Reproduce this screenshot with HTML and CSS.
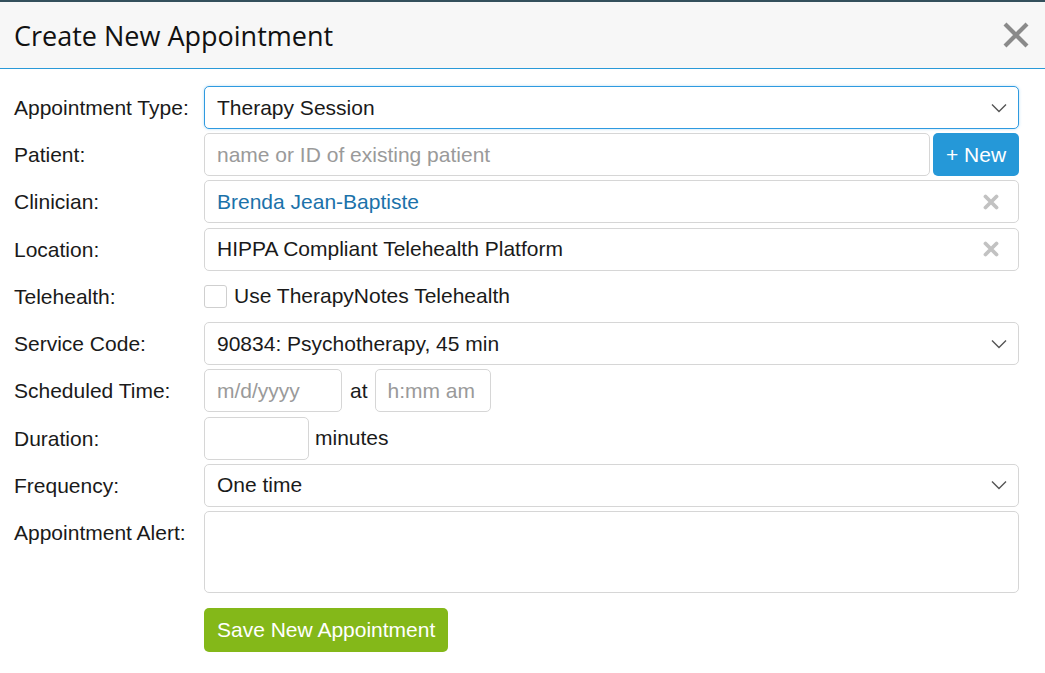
FILE: index.html
```html
<!DOCTYPE html>
<html lang="en">
<head>
<meta charset="utf-8">
<title>Create New Appointment</title>
<link rel="stylesheet" href="styles.css">
</head>
<body>
<div class="topstrip"></div>
<div class="dialog">
  <header class="dlg-head">
    <h1 class="dlg-title">Create New Appointment</h1>
    <button class="dlg-close" aria-label="Close">
      <svg width="28" height="28" viewBox="0 0 28 28"><path d="M3 3 L25 25 M25 3 L3 25" stroke="#8a8a8a" stroke-width="4.2" stroke-linecap="butt"/></svg>
    </button>
  </header>
  <form class="form">
    <label class="lbl">Appointment Type:</label>
    <div class="field select focused"><span class="val">Therapy Session</span><span class="chev"><svg width="16" height="10" viewBox="0 0 16 10"><path d="M1 1.5 L8 8.5 L15 1.5" fill="none" stroke="#555" stroke-width="1.4"/></svg></span></div>

    <label class="lbl">Patient:</label>
    <div class="inline">
      <div class="field grow"><span class="ph">name or ID of existing patient</span></div>
      <button type="button" class="btn-new">+ New</button>
    </div>

    <label class="lbl">Clinician:</label>
    <div class="field"><span class="val link">Brenda Jean-Baptiste</span><span class="clear"><svg width="16" height="16" viewBox="0 0 16 16"><path d="M2.5 2.5 L13.5 13.5 M13.5 2.5 L2.5 13.5" stroke="#c2c2c2" stroke-width="3.8" stroke-linecap="round"/></svg></span></div>

    <label class="lbl">Location:</label>
    <div class="field"><span class="val">HIPPA Compliant Telehealth Platform</span><span class="clear"><svg width="16" height="16" viewBox="0 0 16 16"><path d="M2.5 2.5 L13.5 13.5 M13.5 2.5 L2.5 13.5" stroke="#c2c2c2" stroke-width="3.8" stroke-linecap="round"/></svg></span></div>

    <label class="lbl">Telehealth:</label>
    <div class="inline check-row"><span class="checkbox"></span><span class="txt">Use TherapyNotes Telehealth</span></div>

    <label class="lbl">Service Code:</label>
    <div class="field select"><span class="val">90834: Psychotherapy, 45 min</span><span class="chev"><svg width="16" height="10" viewBox="0 0 16 10"><path d="M1 1.5 L8 8.5 L15 1.5" fill="none" stroke="#555" stroke-width="1.4"/></svg></span></div>

    <label class="lbl">Scheduled Time:</label>
    <div class="inline">
      <div class="field date"><span class="ph">m/d/yyyy</span></div>
      <span class="txt at">at</span>
      <div class="field time"><span class="ph">h:mm am</span></div>
    </div>

    <label class="lbl">Duration:</label>
    <div class="inline">
      <div class="field dur"></div>
      <span class="txt">minutes</span>
    </div>

    <label class="lbl">Frequency:</label>
    <div class="field select"><span class="val">One time</span><span class="chev"><svg width="16" height="10" viewBox="0 0 16 10"><path d="M1 1.5 L8 8.5 L15 1.5" fill="none" stroke="#555" stroke-width="1.4"/></svg></span></div>

    <label class="lbl top">Appointment Alert:</label>
    <div class="field area"></div>

    <span></span>
    <div class="actions"><button type="button" class="btn-save">Save New Appointment</button></div>
  </form>
</div>
</body>
</html>
```
FILE: styles.css
```css
html, body {
  margin: 0;
  padding: 0;
  background: #ffffff;
}
body {
  font-family: "Liberation Sans", Arial, sans-serif;
  font-size: 21px;
  color: #1a1a1a;
  width: 1045px;
  height: 673px;
  overflow: hidden;
}
.topstrip {
  height: 2px;
  background: #34505c;
}
.dlg-head {
  height: 67px;
  background: #f7f7f7;
  border-bottom: 1px solid #2a9ad8;
  display: flex;
  align-items: center;
  justify-content: space-between;
  padding: 0 15px 0 14px;
  box-sizing: border-box;
}
.dlg-title {
  margin: 0;
  font-family: "Open Sans", sans-serif;
  font-weight: 400;
  font-size: 27px;
  color: #111;
}
.dlg-close {
  border: 0;
  background: none;
  padding: 0;
  width: 28px;
  height: 28px;
  display: flex;
}
.form {
  display: grid;
  grid-template-columns: 190px 815px;
  row-gap: 4.22px;
  padding: 17px 0 0 14px;
  align-items: center;
}
.lbl {
  color: #1a1a1a;
  line-height: 43px;
  align-self: start;
}
.field {
  height: 43px;
  box-sizing: border-box;
  border: 1px solid #d6d6d6;
  border-radius: 5px;
  background: #fff;
  display: flex;
  align-items: center;
  padding: 0 12px;
}
.field.focused {
  border-color: #2f9ae0;
  box-shadow: 0 0 3px rgba(47, 154, 224, 0.35);
}
.val { flex: 1; white-space: nowrap; }
.val.link { color: #1b72aa; }
.ph { color: #9a9a9a; white-space: nowrap; }
.chev { display: flex; margin-right: -1px; }
.clear {
  display: flex;
  margin-right: 7px;
}
.inline {
  display: flex;
  align-items: center;
  gap: 3px;
}
.grow { flex: 1; }
.btn-new {
  width: 86px;
  height: 43px;
  border: 0;
  border-radius: 5px;
  background: #2598d8;
  color: #fff;
  font-family: "Liberation Sans", Arial, sans-serif;
  font-size: 21px;
  padding: 0;
}
.check-row {
  height: 43px;
  gap: 7px;
}
.checkbox {
  width: 21px;
  height: 21px;
  border: 1px solid #cfcfcf;
  border-radius: 3px;
  background: #fff;
}
.txt { white-space: nowrap; }
.date { width: 138px; }
.time { width: 116px; }
.at { margin: 0 4px 0 5px; }
.dur { width: 105px; }
.inline .dur + .txt { margin-left: 3px; }
.area {
  height: 82px;
}
.actions {
  padding-top: 11px;
}
.btn-save {
  height: 44px;
  padding: 0 13px;
  border: 0;
  border-radius: 5px;
  background: #84b819;
  color: #fff;
  font-family: "Liberation Sans", Arial, sans-serif;
  font-size: 21px;
}
```
